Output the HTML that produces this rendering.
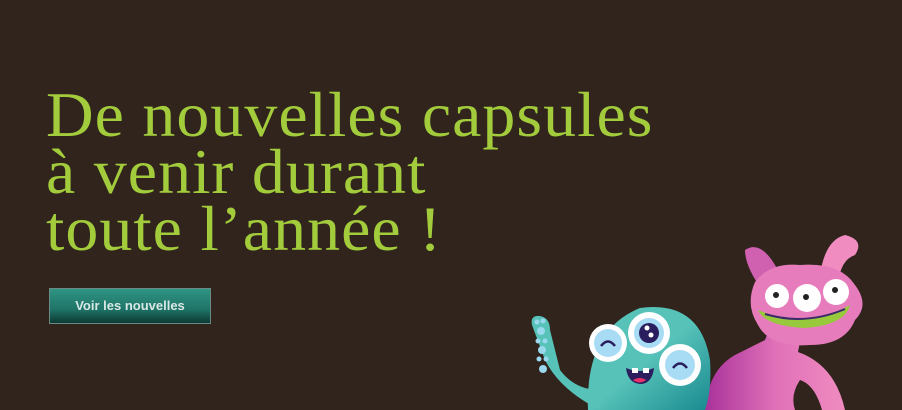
<!DOCTYPE html>
<html><head><meta charset="utf-8"><style>
html,body{margin:0;padding:0}
body{width:902px;height:410px;background:#30241c;position:relative;overflow:hidden;font-family:"Liberation Sans",sans-serif}
.t{position:absolute;left:46px;top:86px;color:#a3cc3c;font-family:"Liberation Serif",serif;font-size:64px;line-height:57px;white-space:nowrap;transform-origin:0 0;transform:scaleX(1.03);letter-spacing:1px}
.b{position:absolute;left:49px;top:288px;width:160px;height:34px;border:1px solid #6a8a84;background:linear-gradient(#2f9483,#1f7468 60%,#0c3a33);color:#d8e8e4;font-weight:bold;font-size:13px;line-height:34px;text-align:center}
svg{position:absolute;left:0;top:0}
</style></head><body>
<div class="t">De nouvelles capsules<br>à venir durant<br>toute l’année !</div>
<div class="b">Voir les nouvelles</div>
<svg width="902" height="410" viewBox="0 0 902 410">
<defs>
<linearGradient id="p" x1="0" x2="1"><stop offset="0" stop-color="#a8329a"/><stop offset=".5" stop-color="#e070b8"/><stop offset="1" stop-color="#f08cc0"/></linearGradient>
<linearGradient id="g" x1="0" y1="0" x2="1" y2="1"><stop offset=".5" stop-color="#56c2b8"/><stop offset="1" stop-color="#1a8a90"/></linearGradient>
</defs>
<!-- pink monster -->
<path d="M705 410 Q708 370 735 355 L765 340 Q772 325 768 310 L800 310 Q802 335 798 352 Q835 365 845 410 L822 410 Q815 385 800 380 Q790 395 795 410Z" fill="url(#p)"/>
<path d="M770 300 Q745 270 745 250 Q760 240 775 265 Q780 275 790 272 Z" fill="#d060b0"/>
<path d="M820 275 Q825 240 845 235 Q865 240 855 255 Q840 260 838 285Z" fill="#f08cc0"/>
<path d="M755 282 Q770 262 800 265 Q840 262 855 285 Q870 305 855 320 Q845 345 810 345 Q770 348 758 325 Q745 305 755 282Z" fill="#e67cbc"/>
<circle cx="777" cy="296" r="12" fill="#fff"/><circle cx="807" cy="298" r="14" fill="#fff"/><circle cx="836" cy="292" r="13" fill="#fff"/>
<circle cx="776" cy="295" r="3" fill="#222"/><circle cx="806" cy="297" r="3" fill="#222"/><circle cx="835" cy="290" r="3" fill="#222"/>
<path d="M758 310 Q805 330 850 305 Q845 325 805 328 Q765 326 758 310Z" fill="#98c83c"/>
<path d="M765 314 Q805 326 845 309" stroke="#3a2a6a" stroke-width="2" fill="none"/>
<!-- teal monster -->
<path d="M588 410 Q585 330 640 308 Q700 300 710 360 Q712 390 705 410Z" fill="url(#g)"/>
<path d="M600 410 Q560 390 545 360 L532 325 Q530 315 540 316 Q550 318 550 330 L560 370 Q575 390 600 390Z" fill="#56c2b8"/>
<g fill="#9ad8ee"><circle cx="537" cy="322" r="2.5"/><circle cx="543" cy="321" r="2.5"/><circle cx="541" cy="331" r="4"/><circle cx="538" cy="341" r="2.5"/><circle cx="545" cy="341" r="2.5"/><circle cx="542" cy="350" r="4"/><circle cx="539" cy="359" r="2.5"/><circle cx="546" cy="359" r="2.5"/><circle cx="543" cy="369" r="4"/></g>
<circle cx="608" cy="343" r="19" fill="#fff"/><circle cx="608" cy="343" r="14" fill="#a8dcf4"/>
<circle cx="649" cy="333" r="21" fill="#fff"/><circle cx="649" cy="333" r="15" fill="#a8dcf4"/><circle cx="649" cy="333" r="10" fill="#2a1e5e"/><circle cx="647" cy="328" r="2.5" fill="#fff"/><circle cx="651" cy="335" r="2.5" fill="#fff"/>
<circle cx="680" cy="365" r="21" fill="#fff"/><circle cx="680" cy="365" r="15" fill="#a8dcf4"/>
<path d="M601 346 Q608 337 615 346" stroke="#2a1e5e" stroke-width="2.5" fill="none"/>
<path d="M673 368 Q680 359 687 368" stroke="#2a1e5e" stroke-width="2.5" fill="none"/>
<path d="M626 368 Q640 374 654 368 Q652 384 640 384 Q628 383 626 368Z" fill="#2a1e5e"/>
<path d="M633 380 Q640 376 646 380 Q640 385 633 380Z" fill="#e8306a"/>
<rect x="632" y="368" width="6" height="5" fill="#fff"/><rect x="643" y="368" width="6" height="5" fill="#fff"/>
</svg>
</body></html>
